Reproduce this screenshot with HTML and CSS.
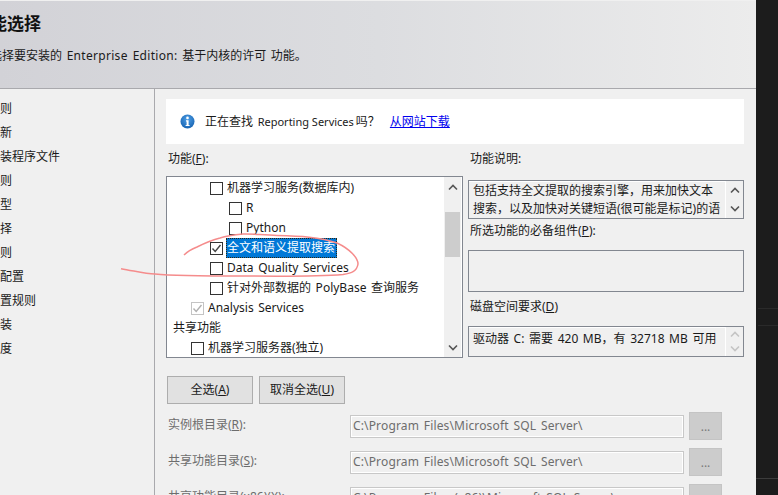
FILE: index.html
```html
<!DOCTYPE html>
<html lang="zh-CN">
<head>
<meta charset="utf-8">
<title>功能选择</title>
<link rel="stylesheet" href="styles.css">
</head>
<body>
<div class="window">
  <header class="head">
    <h1 class="title">功能选择</h1>
    <p class="desc">选择要安装的 <span class="lat">Enterprise Edition:</span> 基于内核的许可 功能。</p>
  </header>
  <div class="body">
    <nav class="steps">
      <div class="step">全局规则</div>
      <div class="step">产品更新</div>
      <div class="step">安装安装程序文件</div>
      <div class="step">安装规则</div>
      <div class="step">安装类型</div>
      <div class="step">功能选择</div>
      <div class="step">功能规则</div>
      <div class="step">服务器配置</div>
      <div class="step">功能配置规则</div>
      <div class="step">准备安装</div>
      <div class="step">安装进度</div>
    </nav>
    <main class="main">
      <div class="info">
        <svg class="info-icon" width="15" height="15" viewBox="0 0 15 15"><defs><radialGradient id="orb" cx="50%" cy="35%" r="70%"><stop offset="0" stop-color="#4f9fe6"/><stop offset="1" stop-color="#135fae"/></radialGradient></defs><circle cx="7.500" cy="7.500" r="7" fill="url(#orb)"/><circle cx="7.500" cy="3.900" r="1.300" fill="#fff"/><path d="M6 6.300h2.600v4.600h1v1.200H5.600v-1.200h1V7.500H6z" fill="#fff"/></svg>
        <span class="info-text">正在查找 <span class="rs">Reporting Services</span>吗？</span>
        <a class="info-link" href="#">从网站下载</a>
      </div>
      <div class="columns">
        <section class="left">
          <div class="label">功能(<u>F</u>):</div>
          <div class="tree">
            <div class="rows">
              <div class="row l2"><span class="cb"></span><span>机器学习服务(数据库内)</span></div>
              <div class="row l3"><span class="cb"></span><span>R</span></div>
              <div class="row l3"><span class="cb"></span><span>Python</span></div>
              <div class="row l2"><span class="cb"><svg width="11" height="11" viewBox="0 0 11 11"><path d="M1.500 5.500 4.200 8.500 9.500 2" fill="none" stroke="#444" stroke-width="1.400"/></svg></span><span class="sel">全文和语义提取搜索</span></div>
              <div class="row l2"><span class="cb"></span><span>Data Quality Services</span></div>
              <div class="row l2"><span class="cb"></span><span>针对外部数据的 PolyBase 查询服务</span></div>
              <div class="row l1"><span class="cb off"><svg width="11" height="11" viewBox="0 0 11 11"><path d="M1.500 5.500 4.200 8.500 9.500 2" fill="none" stroke="#b0b0b0" stroke-width="1.400"/></svg></span><span>Analysis Services</span></div>
              <div class="row l0"><span>共享功能</span></div>
              <div class="row l1"><span class="cb"></span><span>机器学习服务器(独立)</span></div>
            </div>
            <div class="vbar">
              <svg class="chev" width="10" height="7" viewBox="0 0 10 7"><path d="M1 5.500 5 1.500 9 5.500" fill="none" stroke="#555" stroke-width="1.600"/></svg>
              <div class="thumb"></div>
              <svg class="chev" width="10" height="7" viewBox="0 0 10 7"><path d="M1 1.500 5 5.500 9 1.500" fill="none" stroke="#555" stroke-width="1.600"/></svg>
            </div>
          </div>
        </section>
        <section class="right">
          <div class="label">功能说明:</div>
          <div class="box box-desc">
            <div class="box-text">包括支持全文提取的搜索引擎，用来加快文本<br>搜索，以及加快对关键短语(很可能是标记)的语</div>
            <div class="mini">
              <svg width="10" height="7" viewBox="0 0 10 7"><path d="M1 5.500 5 1.500 9 5.500" fill="none" stroke="#555" stroke-width="1.600"/></svg>
              <svg width="10" height="7" viewBox="0 0 10 7"><path d="M1 1.500 5 5.500 9 1.500" fill="none" stroke="#555" stroke-width="1.600"/></svg>
            </div>
          </div>
          <div class="label label-req">所选功能的必备组件(<u>P</u>):</div>
          <div class="box box-req"></div>
          <div class="label label-disk">磁盘空间要求(<u>D</u>)</div>
          <div class="box box-disk">
            <div class="box-text">驱动器 C: 需要 420 MB，有 32718 MB 可用</div>
            <div class="mini">
              <svg width="10" height="7" viewBox="0 0 10 7"><path d="M1 5.500 5 1.500 9 5.500" fill="none" stroke="#c4c4c4" stroke-width="1.600"/></svg>
              <svg width="10" height="7" viewBox="0 0 10 7"><path d="M1 1.500 5 5.500 9 1.500" fill="none" stroke="#c4c4c4" stroke-width="1.600"/></svg>
            </div>
          </div>
        </section>
      </div>
      <div class="buttons">
        <button class="btn">全选(<u>A</u>)</button>
        <button class="btn">取消全选(<u>U</u>)</button>
      </div>
      <div class="dirs">
        <div class="dir">
          <div class="dir-label">实例根目录(<u>R</u>):</div>
          <div class="dir-input">C:\Program Files\Microsoft SQL Server\</div>
          <div class="dir-btn">...</div>
        </div>
        <div class="dir">
          <div class="dir-label">共享功能目录(<u>S</u>):</div>
          <div class="dir-input">C:\Program Files\Microsoft SQL Server\</div>
          <div class="dir-btn">...</div>
        </div>
        <div class="dir">
          <div class="dir-label">共享功能目录(x86)(<u>X</u>):</div>
          <div class="dir-input">C:\Program Files (x86)\Microsoft SQL Server\</div>
          <div class="dir-btn">...</div>
        </div>
      </div>
    </main>
  </div>
  <svg class="scribble" width="756" height="495" viewBox="0 0 756 495"><path d="M121 268.700C135 271 145 274 155 274C165 275 190 276 243 276C290 276.500 325 276 343 274.500C352 273 357 271 358 264C358 258 350 249 337 243C320 237 300 236 277 235.500C262 235 250 233.500 243 234C232 235 226 236 220 238C212 240 203 244 197 247C192 249 187 252 184 255" fill="none" stroke="#f58c8c" stroke-width="1.500"/></svg>
</div>
<aside class="edge">
  <div class="edge-line a"></div>
  <div class="edge-line b"></div>
  <div class="edge-line c"></div>
</aside>
</body>
</html>
```
FILE: styles.css
```css
* { box-sizing: border-box; }
html, body { margin: 0; height: 100%; }
body {
  display: flex;
  background: #1c1c1c;
  overflow: hidden;
  font-family: "Noto Sans", "Noto Sans CJK SC", sans-serif;
  font-size: 12px;
  color: #1a1a1a;
  line-height: 16px;
  word-spacing: 1.500px;
}
.window {
  position: relative;
  width: 756px;
  height: 495px;
  flex: none;
  background: #f0f0f0;
  overflow: hidden;
  padding-top: 1px;
}
.edge { flex: 1; padding-top: 308px; }
.edge-line { height: 1px; }
.edge-line.a { background: #2a2a2a; margin-left: 2px; }
.edge-line.b { background: #2a2a2a; margin: 16px 0 0 2px; }
.edge-line.c { background: #3c3c3c; margin-top: 152px; }
.head {
  height: 88px;
  border-bottom: 1px solid #a9a9ad;
  background: linear-gradient(90deg, #d2d2d7 0%, #dcdde0 50%, #ececec 100%);
  padding-top: 13px;
}
.title {
  margin: 0 0 0 -27px;
  font-size: 17px;
  line-height: 20px;
  font-weight: 700;
  color: #111;
}
.desc { margin: 14px 0 0 -10px; }
.lat { letter-spacing: 0.300px; }
.body { display: flex; height: 406px; }
.steps {
  width: 155px;
  flex: none;
  border-right: 1px solid #a9a9ad;
  padding-top: 8px;
  overflow: hidden;
}
.step { height: 24px; line-height: 24px; margin-left: -36px; white-space: nowrap; }
.main { flex: 1; padding: 10px 12px 0 11px; min-width: 0; }
.info {
  height: 45px;
  background: #fff;
  display: flex;
  align-items: center;
  padding-left: 14px;
}
.info-icon { flex: none; margin-right: 10px; }
.rs { font-size: 11px; word-spacing: 0; margin-right: 2px; }
.info-link { margin-left: 10px; color: #0000ee; }
.columns { display: flex; margin-top: 6px; }
.left { width: 297px; flex: none; }
.right { margin-left: 5px; width: 276px; flex: none; }
.label { height: 16px; margin-left: 2px; white-space: nowrap; margin-top: 1px; }
.tree {
  margin-top: 9px;
  height: 182px;
  border: 1px solid #828790;
  background: #fff;
  display: flex;
}
.rows { flex: 1; padding-top: 1px; overflow: hidden; }
.row { height: 20px; display: flex; align-items: center; white-space: nowrap; }
.l0 { padding-left: 6px; }
.l1 { padding-left: 24px; }
.l2 { padding-left: 43px; }
.l3 { padding-left: 62px; }
.cb {
  width: 13px;
  height: 13px;
  flex: none;
  border: 1px solid #333;
  background: #fff;
  margin-right: 4px;
  display: flex;
  align-items: center;
  justify-content: center;
}
.cb.off { border-color: #c4c4c4; }
.sel {
  background: #0078d7;
  color: #fff;
  height: 20px;
  line-height: 18px;
  padding: 0 1px 0 0;
  margin-left: -1px;
  border: 1px dotted #30260f;
}
.vbar {
  width: 17px;
  flex: none;
  background: #f0f0f0;
  margin: 0 1px 0 0;
  display: flex;
  flex-direction: column;
  align-items: center;
  padding-top: 7px;
}
.chev { flex: none; }
.thumb { width: 15px; height: 45px; background: #cdcdcd; margin-top: 21px; margin-bottom: 87px; flex: none; }
.box { border: 1px solid #828790; background: #f0f0f0; display: flex; }
.box-desc { height: 39px; margin-top: 13px; }
.box-req { height: 42px; margin-top: 11px; }
.box-disk { height: 31px; margin-top: 11px; }
.label-req { margin-top: 4px; }
.label-disk { margin-top: 7px; }
.box-text {
  flex: 1;
  padding: 0 0 0 4px;
  line-height: 18px;
  white-space: nowrap;
  overflow: hidden;
  border-top: 1px solid #fff;
}
.box-disk .box-text { padding-top: 2px; }
.mini {
  width: 18px;
  flex: none;
  border-left: 1px solid #fff;
  display: flex;
  flex-direction: column;
  align-items: center;
  justify-content: space-around;
}
.buttons { display: flex; gap: 6px; margin-top: 18px; padding-left: 1px; }
.btn {
  width: 86px;
  height: 28px;
  background: #e1e1e1;
  border: 1px solid #adadad;
  font: inherit;
  word-spacing: inherit;
  color: inherit;
  padding: 0;
}
.dirs { margin-top: 8px; }
.dir { display: flex; align-items: center; height: 28px; margin-bottom: 8px; }
.dir-label { width: 184px; flex: none; padding: 0 0 2px 2px; color: #6d6d6d; white-space: nowrap; }
.dir-input {
  width: 334px;
  height: 23px;
  flex: none;
  border: 1px solid #c8c8c8;
  box-shadow: inset 0 0 0 1px #fff;
  padding-left: 2px;
  line-height: 19px;
  letter-spacing: 0.150px;
  color: #6d6d6d;
  white-space: nowrap;
  overflow: hidden;
}
.dir-btn {
  width: 33px;
  height: 28px;
  margin-left: 5px;
  flex: none;
  background: #cccccc;
  border: 1px solid #c4c4c4;
  color: #7a7a7a;
  text-align: center;
  line-height: 28px;
}
.scribble { position: absolute; left: 0; top: 0; pointer-events: none; }
```
